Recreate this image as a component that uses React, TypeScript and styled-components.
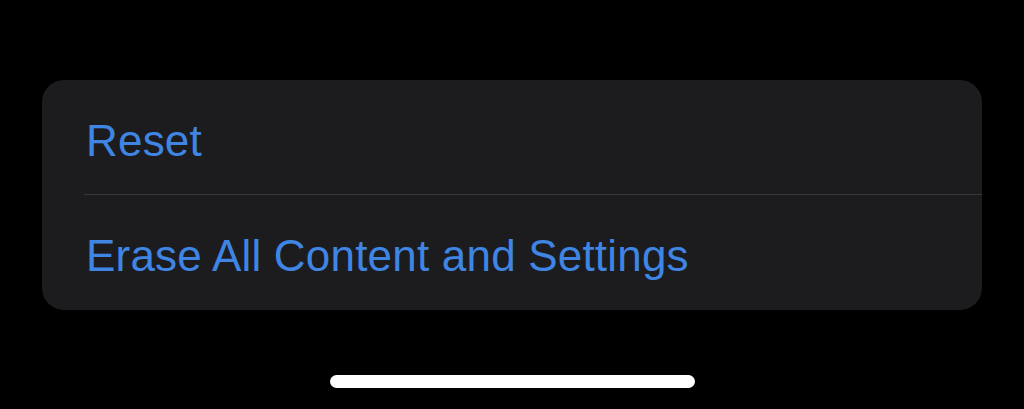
import React, { FC } from 'react';
import styled, { createGlobalStyle } from 'styled-components';

const GlobalStyle = createGlobalStyle`
  html, body {
    margin: 0;
    padding: 0;
    background: #000;
  }
  body {
    font-family: 'Liberation Sans', Arial, sans-serif;
    -webkit-font-smoothing: antialiased;
  }
`;

const Screen = styled.div`
  width: 1024px;
  height: 409px;
  background: #000;
  display: flex;
  flex-direction: column;
  align-items: center;
  padding-top: 80px;
  box-sizing: border-box;
  overflow: hidden;
`;

const Group = styled.ul`
  list-style: none;
  margin: 0;
  padding: 0;
  width: 940px;
  background: #1c1c1e;
  border-radius: 22px;
  overflow: hidden;
`;

const Row = styled.li<{ $last?: boolean }>`
  height: ${p => (p.$last ? 115 : 114)}px;
  margin-left: 42px;
  display: flex;
  align-items: center;
  border-bottom: ${p => (p.$last ? 'none' : '1px solid #38383a')};
`;

const Action = styled.span`
  color: #3f85e4;
  font-size: 44px;
  letter-spacing: 0.2px;
  padding-left: 2px;
  padding-top: 7px;
`;

const HomeIndicator = styled.div`
  margin-top: 65px;
  width: 365px;
  height: 13px;
  border-radius: 7px;
  background: #fff;
`;

const actions = ['Reset', 'Erase All Content and Settings'];

const App: FC = () => (
  <>
    <GlobalStyle />
    <Screen>
      <Group>
        {actions.map((label, i) => (
          <Row key={label} $last={i === actions.length - 1}>
            <Action>{label}</Action>
          </Row>
        ))}
      </Group>
      <HomeIndicator />
    </Screen>
  </>
);

export default App;
